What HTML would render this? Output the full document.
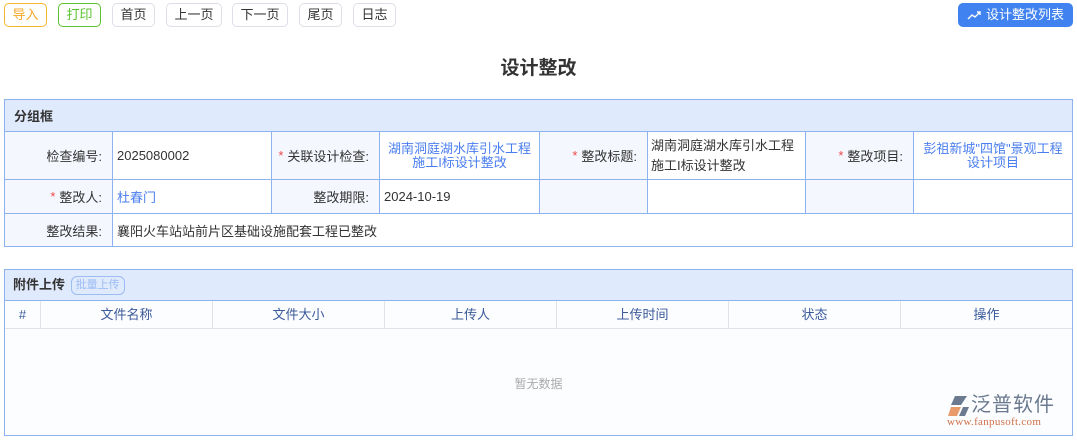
<!DOCTYPE html>
<html><head><meta charset="utf-8"><style>
*{box-sizing:border-box;margin:0;padding:0}
body{width:1077px;height:440px;background:#fff;font-family:"Liberation Sans","Noto Sans CJK SC",sans-serif;font-size:13px;color:#333;position:relative;overflow:hidden}
.b{position:absolute;top:3px;height:24px;border:1px solid #dcdfe6;border-radius:5px;line-height:22px;text-align:center;font-size:13px;background:#fff}
.abs{position:absolute}
.c{position:absolute;border-right:1px solid #8cb2f0;border-bottom:1px solid #8cb2f0;display:flex;align-items:center;padding:0 4px}
.l{background:#f4f7fe;justify-content:flex-end;padding-right:10px}
.lk{color:#4a7ef0;justify-content:center;text-align:center;line-height:14px}
.s{color:#f04848;margin-right:4px}
.th{position:absolute;top:301px;height:28px;line-height:28px;text-align:center;color:#3a5a9a;border-right:1px solid #e0e3ea;border-bottom:1px solid #e0e3ea;background:#fcfdff}
</style></head><body>
<div class="b" style="left:4px;width:43px;border-color:#f5b62e;color:#f5a623">导入</div>
<div class="b" style="left:58px;width:43px;border-color:#5ac42e;color:#5ac42e">打印</div>
<div class="b" style="left:112px;width:43px">首页</div>
<div class="b" style="left:166px;width:56px">上一页</div>
<div class="b" style="left:232px;width:56px">下一页</div>
<div class="b" style="left:299px;width:43px">尾页</div>
<div class="b" style="left:353px;width:43px">日志</div>
<div class="b" style="left:958px;width:115px;background:#3f82f0;border-color:#3f82f0;color:#fff"><svg width="14" height="10" viewBox="0 0 14 10" style="vertical-align:-1px;margin-right:5px"><path d="M1 9 L5 5 L8 7 L13 2 M10 2 H13 V5" fill="none" stroke="#fff" stroke-width="1.4"/></svg>设计整改列表</div>
<div class="abs" style="left:0;width:1077px;top:53px;text-align:center;font-size:19px;font-weight:bold;color:#333">设计整改</div>

<div class="abs" style="left:4px;top:99px;width:1069px;height:148px;border-left:1px solid #8cb2f0;border-top:1px solid #8cb2f0"></div>
<div class="c" style="left:5px;top:100px;width:1068px;height:32px;background:#dfeafd;font-weight:bold;padding-left:9px">分组框</div>
<div class="c l" style="left:5px;top:132px;width:108px;height:48px">检查编号:</div>
<div class="c" style="left:113px;top:132px;width:159px;height:48px">2025080002</div>
<div class="c l" style="left:272px;top:132px;width:108px;height:48px"><span class="s">*</span>关联设计检查:</div>
<div class="c lk" style="left:380px;top:132px;width:160px;height:48px">湖南洞庭湖水库引水工程施工I标设计整改</div>
<div class="c l" style="left:540px;top:132px;width:108px;height:48px"><span class="s">*</span>整改标题:</div>
<div class="c" style="left:648px;top:132px;width:158px;height:48px;line-height:20px;padding:0 3px">湖南洞庭湖水库引水工程施工I标设计整改</div>
<div class="c l" style="left:806px;top:132px;width:108px;height:48px"><span class="s">*</span>整改项目:</div>
<div class="c lk" style="left:914px;top:132px;width:159px;height:48px;padding:0 3px">彭祖新城"四馆"景观工程设计项目</div>
<div class="c l" style="left:5px;top:180px;width:108px;height:34px"><span class="s">*</span>整改人:</div>
<div class="c" style="left:113px;top:180px;width:159px;height:34px;color:#4a7ef0">杜春门</div>
<div class="c l" style="left:272px;top:180px;width:108px;height:34px">整改期限:</div>
<div class="c" style="left:380px;top:180px;width:160px;height:34px">2024-10-19</div>
<div class="c l" style="left:540px;top:180px;width:108px;height:34px"></div>
<div class="c" style="left:648px;top:180px;width:158px;height:34px"></div>
<div class="c l" style="left:806px;top:180px;width:108px;height:34px"></div>
<div class="c" style="left:914px;top:180px;width:159px;height:34px"></div>
<div class="c l" style="left:5px;top:214px;width:108px;height:33px">整改结果:</div>
<div class="c" style="left:113px;top:214px;width:960px;height:33px">襄阳火车站站前片区基础设施配套工程已整改</div>

<div class="abs" style="left:4px;top:269px;width:1069px;height:167px;border:1px solid #8cb2f0;background:#fcfdff"></div>
<div class="abs" style="left:5px;top:270px;width:1067px;height:31px;background:#dfeafd;border-bottom:1px solid #8cb2f0;padding-left:8px;line-height:30px;font-weight:bold">附件上传 <span style="display:inline-block;margin-left:2px;border:1px solid #9dbcf2;border-radius:6px;font-weight:normal;font-size:11px;color:#9dbcf2;line-height:17px;padding:0 4px;vertical-align:1px">批量上传</span></div>
<div class="th" style="left:5px;width:36px">#</div>
<div class="th" style="left:41px;width:172px">文件名称</div>
<div class="th" style="left:213px;width:172px">文件大小</div>
<div class="th" style="left:385px;width:172px">上传人</div>
<div class="th" style="left:557px;width:172px">上传时间</div>
<div class="th" style="left:729px;width:172px">状态</div>
<div class="th" style="left:901px;width:171px;border-right:none">操作</div>
<div class="abs" style="left:0;width:1077px;top:375px;text-align:center;font-size:12px;color:#aaa">暂无数据</div>
<div class="abs" style="left:945px;top:393px;width:125px">
<svg width="24" height="22" viewBox="0 0 24 22" style="position:absolute;left:2px;top:2px"><path d="M8 1 L20 1 L14 10 L4 10 Z" fill="#6b7a8f"/><path d="M4 12 L14 12 L10 21 L1 21 Z" fill="#e89a6a"/><path d="M16 12 L22 12 L18 21 L12 21Z" fill="#6b7a8f"/></svg>
<div style="position:absolute;left:26px;top:0;font-size:20px;color:#6b7a8f;letter-spacing:1px;line-height:24px">泛普软件</div>
<div style="position:absolute;left:2px;top:23px;font-family:'Liberation Serif',serif;font-size:11px;color:#d0704a;letter-spacing:.3px">www.fanpusoft.com</div>
</div>
</body></html>
